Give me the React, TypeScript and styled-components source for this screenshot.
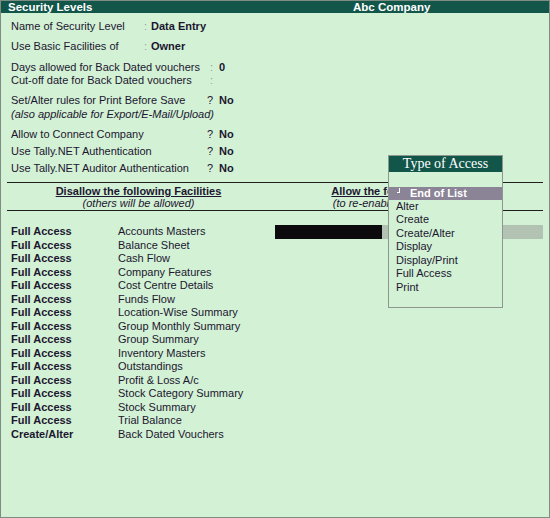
import React from 'react';
import styled, { createGlobalStyle } from 'styled-components';

const GlobalStyle = createGlobalStyle`
  html, body {
    margin: 0;
    padding: 0;
    background: #d3f1d5;
  }
  body {
    font-family: "Liberation Sans", Arial, sans-serif;
    font-size: 11px;
    color: #1c1630;
  }
`;

interface Facility {
  access: string;
  name: string;
}

const facilities: Facility[] = [
  { access: 'Full Access', name: 'Accounts Masters' },
  { access: 'Full Access', name: 'Balance Sheet' },
  { access: 'Full Access', name: 'Cash Flow' },
  { access: 'Full Access', name: 'Company Features' },
  { access: 'Full Access', name: 'Cost Centre Details' },
  { access: 'Full Access', name: 'Funds Flow' },
  { access: 'Full Access', name: 'Location-Wise Summary' },
  { access: 'Full Access', name: 'Group Monthly Summary' },
  { access: 'Full Access', name: 'Group Summary' },
  { access: 'Full Access', name: 'Inventory Masters' },
  { access: 'Full Access', name: 'Outstandings' },
  { access: 'Full Access', name: 'Profit & Loss A/c' },
  { access: 'Full Access', name: 'Stock Category Summary' },
  { access: 'Full Access', name: 'Stock Summary' },
  { access: 'Full Access', name: 'Trial Balance' },
  { access: 'Create/Alter', name: 'Back Dated Vouchers' },
];

const accessTypes = ['Alter', 'Create', 'Create/Alter', 'Display', 'Display/Print', 'Full Access', 'Print'];

const App: React.FC = () => (
  <>
    <GlobalStyle />
    <Frame>
      <TitleBar>
        <TitleLeft>Security Levels</TitleLeft>
        <span>Abc Company</span>
      </TitleBar>

      <Body>
        <Form>
          <Group>
            <Row>
              <Label $w={133}>Name of Security Level</Label>
              <Sep $w={7} $faint>:</Sep>
              <Value>Data Entry</Value>
            </Row>
          </Group>
          <Group>
            <Row>
              <Label $w={133}>Use Basic Facilities of</Label>
              <Sep $w={7} $faint>:</Sep>
              <Value>Owner</Value>
            </Row>
          </Group>
          <Group>
            <Row>
              <Label $w={199}>Days allowed for Back Dated vouchers</Label>
              <Sep $w={9} $faint>:</Sep>
              <Value>0</Value>
            </Row>
            <Row>
              <Label $w={199}>Cut-off date for Back Dated vouchers</Label>
              <Sep $w={9} $faint>:</Sep>
            </Row>
          </Group>
          <Group>
            <Row>
              <Label $w={196}>Set/Alter rules for Print Before Save</Label>
              <Sep $w={12}>?</Sep>
              <Value>No</Value>
            </Row>
            <Row>
              <Note>(also applicable for Export/E-Mail/Upload)</Note>
            </Row>
          </Group>
          <Group $gap={3.25}>
            <Row>
              <Label $w={196}>Allow to Connect Company</Label>
              <Sep $w={12}>?</Sep>
              <Value>No</Value>
            </Row>
            <Row>
              <Label $w={196}>Use Tally.NET Authentication</Label>
              <Sep $w={12}>?</Sep>
              <Value>No</Value>
            </Row>
            <Row>
              <Label $w={196}>Use Tally.NET Auditor Authentication</Label>
              <Sep $w={12}>?</Sep>
              <Value>No</Value>
            </Row>
          </Group>
        </Form>

        <Divider $top={6.5} />
        <Columns>
          <HeadCell>
            <Heading>Disallow the following Facilities</Heading>
            <Note>(others will be allowed)</Note>
          </HeadCell>
          <HeadCell>
            <Heading>Allow the following Facilities</Heading>
            <Note>(to re-enable disallowed ones)</Note>
          </HeadCell>
        </Columns>
        <Divider />

        <ListColumns>
          <div>
            {facilities.map((f) => (
              <ListRow key={f.name}>
                <Access>{f.access}</Access>
                <span>{f.name}</span>
              </ListRow>
            ))}
          </div>
          <div>
            <SelectedRow>
              <Cursor />
              <RowFill />
            </SelectedRow>
          </div>
        </ListColumns>
      </Body>

      <Popup>
        <PopupHeader>Type of Access</PopupHeader>
        <PopupList>
          <EndOfList>
            <ReturnMark />
            End of List
          </EndOfList>
          {accessTypes.map((t) => (
            <PopupItem key={t}>{t}</PopupItem>
          ))}
        </PopupList>
      </Popup>
    </Frame>
  </>
);

// --- Frame & title ---
const Frame = styled.div`
  position: relative;
  box-sizing: border-box;
  width: 550px;
  height: 518px;
  border: 1px solid #7e8c84;
  background: #d3f1d5;
  display: flex;
  flex-direction: column;
  overflow: hidden;
`;

const TitleBar = styled.div`
  display: flex;
  align-items: center;
  height: 12px;
  padding-left: 7px;
  background: #12564a;
  color: #ffffff;
  font-weight: bold;
  font-size: 11.5px;
  line-height: 12px;
  white-space: nowrap;
  overflow: hidden;
`;

const TitleLeft = styled.span`
  flex: 0 0 345px;
`;

const Body = styled.div`
  display: flex;
  flex-direction: column;
  padding: 7px 6px 0 6px;
`;

// --- Top form ---
const Form = styled.div`
  display: flex;
  flex-direction: column;
  gap: 6.75px;
  padding-left: 4px;
`;

const Group = styled.div<{ $gap?: number }>`
  display: flex;
  flex-direction: column;
  gap: ${({ $gap }) => $gap ?? 0}px;
`;

const Row = styled.div`
  display: flex;
  height: 13.5px;
  line-height: 13.5px;
  white-space: nowrap;
`;

const Label = styled.span<{ $w: number }>`
  flex: 0 0 ${({ $w }) => $w}px;
`;

const Sep = styled.span<{ $w: number; $faint?: boolean }>`
  flex: 0 0 ${({ $w }) => $w}px;
  color: ${({ $faint }) => ($faint ? '#9a9aa6' : '#1c1630')};
`;

const Value = styled.span`
  font-weight: bold;
`;

const Note = styled.span`
  font-style: italic;
`;

// --- Facility table ---
const Divider = styled.div<{ $top?: number }>`
  height: 0;
  border-top: 1px solid #1f1f1f;
  margin-top: ${({ $top }) => $top ?? 0}px;
`;

const Columns = styled.div`
  display: grid;
  grid-template-columns: 263px 1fr;
  padding: 2.5px 0 1px;
`;

const HeadCell = styled.div`
  display: flex;
  flex-direction: column;
  align-items: center;
  line-height: 12px;
  white-space: nowrap;
`;

const Heading = styled.span`
  font-weight: bold;
  text-decoration: underline;
`;

const ListColumns = styled(Columns)`
  padding: 14px 0 0;
`;

const ListRow = styled.div`
  display: flex;
  height: 13.5px;
  line-height: 13.5px;
  padding-left: 4px;
  white-space: nowrap;
`;

const Access = styled.span`
  flex: 0 0 107px;
  font-weight: bold;
`;

const SelectedRow = styled.div`
  display: flex;
  height: 13.5px;
  margin-left: 5px;
`;

const Cursor = styled.div`
  flex: 0 0 107px;
  background: #0c0a0c;
`;

const RowFill = styled.div`
  flex: 1;
  background: #b3c3b3;
`;

// --- Type of Access popup ---
const Popup = styled.div`
  position: absolute;
  left: 387px;
  top: 154px;
  box-sizing: border-box;
  width: 115px;
  height: 153px;
  border: 1px solid #8d968f;
  background: #d3f1d5;
  display: flex;
  flex-direction: column;
`;

const PopupHeader = styled.div`
  height: 16px;
  line-height: 16px;
  background: #12564a;
  color: #ffffff;
  text-align: center;
  font-family: "Liberation Serif", "Times New Roman", serif;
  font-size: 14px;
  white-space: nowrap;
`;

const PopupList = styled.div`
  display: flex;
  flex-direction: column;
  padding-top: 14.5px;
`;

const EndOfList = styled.div`
  display: flex;
  align-items: center;
  height: 13px;
  padding-left: 8px;
  background: #8a8496;
  color: #ffffff;
  font-weight: bold;
  white-space: nowrap;
`;

const ReturnMark = styled.span`
  align-self: flex-start;
  width: 2px;
  height: 4px;
  margin: 1px 10px 0 0;
  border-right: 1px solid #ffffff;
  border-bottom: 1px solid #ffffff;
`;

const PopupItem = styled.div`
  height: 13.5px;
  line-height: 13.5px;
  padding-left: 7px;
  white-space: nowrap;
`;

export default App;
